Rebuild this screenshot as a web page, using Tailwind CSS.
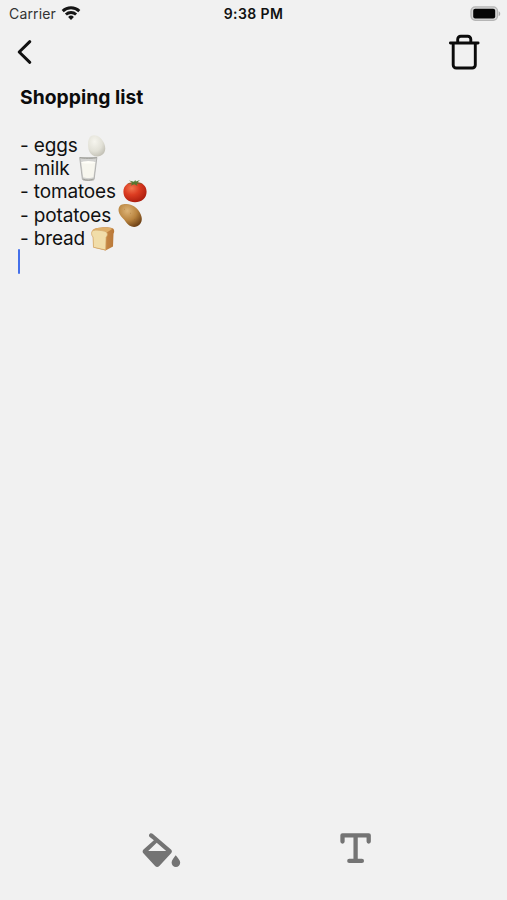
<!DOCTYPE html>
<html lang="en">
<head>
<meta charset="utf-8">
<title>Shopping list</title>
<script src="https://cdn.jsdelivr.net/npm/@tailwindcss/browser@4"></script>
</head>
<body class="bg-[#f1f1f1]">
<div class="w-[507px] h-[900px] flex flex-col bg-[#f1f1f1] font-['Inter','Liberation_Sans',sans-serif] text-[#111] overflow-hidden">
  <header class="h-[27px] grid grid-cols-3 items-center shrink-0">
    <div class="flex items-center pl-[9px] gap-[5px]">
      <span class="text-[14px] leading-[27px] text-[#333] tracking-[0.15px]">Carrier</span>
      <svg class="w-[20px] h-[15px]" viewBox="0 0 20 15" fill="none" stroke="#151515" stroke-width="2.9"><path d="M1.7 5.1a12 12 0 0 1 16.600 0M4.900 8.500a7.500 7.500 0 0 1 10.200 0"/><path d="M7.100 11a4.200 4.200 0 0 1 5.800 0L10 14z" fill="#151515" stroke="none"/></svg>
    </div>
    <span class="text-center text-[14px] font-semibold leading-[27px] tracking-[0.4px]">9:38 PM</span>
    <div class="flex justify-end pr-[6px]">
      <svg class="w-[31px] h-[16px]" viewBox="0 0 31 16"><rect x="1" y=".9" width="26.500" height="13.400" rx="4.200" fill="#d6d6d6" stroke="#b5b5b5" stroke-width="1.300"/><rect x="3.200" y="2.800" width="22" height="9.600" rx="2" fill="#050505"/><path d="M28.700 5.300c2 .8 2 4.100 0 4.900z" fill="#aaa"/></svg>
    </div>
  </header>
  <nav class="h-[51px] flex justify-between items-center pl-[16px] pr-[27px] shrink-0">
    <svg class="w-[18px] h-[26px] mb-[2px]" viewBox="0 0 18 26" fill="none" stroke="#111" stroke-width="3" stroke-linecap="round" stroke-linejoin="round"><path d="M13.800 2.700 3.200 13l10.600 10.300"/></svg>
    <svg class="w-[32px] h-[36px] mb-[1px]" viewBox="0 0 32 36" fill="none" stroke="#0b0b0b" stroke-width="2.900" stroke-linecap="round" stroke-linejoin="round"><path d="M2.400 9h27.700M5.200 9v22a3 3 0 0 0 3 3h16.100a3 3 0 0 0 3-3V9M9.700 9V5.200a3 3 0 0 1 3-3h7.100a3 3 0 0 1 3 3V9"/></svg>
  </nav>
  <main class="flex-1 pl-[20px] pt-[7px]">
    <h1 class="text-[19.300px] leading-[24px] h-[48.500px] font-bold tracking-[0.030px] text-[#0c0c0c]">Shopping list</h1>
    <div class="text-[19px] leading-[24px] tracking-[-0.150px]">
      <div class="flex h-[23.300px]"><span class="w-[64px] shrink-0">- eggs</span><svg class="w-[24px] h-[24px]" viewBox="0 0 24 24"><defs><radialGradient id="egg" cx=".38" cy=".3" r=".75"><stop stop-color="#f6f5ee"/><stop offset=".6" stop-color="#e2e1d7"/><stop offset="1" stop-color="#c2c0b5"/></radialGradient></defs><path d="M7.500 1.800C12-.3 17.800 3.600 20.200 9.500c2.300 5.500.8 10.300-3.600 12.200-4.600 1.900-9.700 0-11.500-4.800C3.400 12.300 3.300 4 7.500 1.800z" fill="url(#egg)"/></svg></div>
      <div class="flex h-[23.700px]"><span class="w-[56px] shrink-0">- milk</span><svg class="w-[24px] h-[24px]" viewBox="0 0 24 24"><path d="M3.700 .4h17.200l-2.800 22c-.2 1.500-11.500 1.500-11.700 0z" fill="#d3d3d1" stroke="#a6a6a3" stroke-width=".8"/><path d="M5.300 5h14l-1.900 15.200c-2 1-8.200 1-10.200 0z" fill="#f7f6ee"/><ellipse cx="12.300" cy="5.300" rx="7" ry="1.200" fill="#fffef8"/><path d="M4 .6c2 1.100 14.500 1.100 16.700 0M7 22c3 1.300 7.500 1.300 10.500 0" fill="none" stroke="#94948e" stroke-width=".8"/></svg></div>
      <div class="flex h-[23.200px]"><span class="w-[103px] shrink-0">- tomatoes</span><svg class="w-[24px] h-[24px]" viewBox="0 0 24 24"><defs><radialGradient id="tom" cx=".36" cy=".3" r=".75"><stop stop-color="#f17650"/><stop offset=".45" stop-color="#dc3c21"/><stop offset="1" stop-color="#a91c0d"/></radialGradient></defs><path d="M12 2.500c5-1.200 11.600 2 11.600 9.200 0 6.600-5.300 10.500-11.600 10.500S.4 18.300.4 11.700C.4 4.500 7 1.300 12 2.500z" fill="url(#tom)"/><path d="M4 4 9 2.600 6 .4l5 1.300L12.300 0l.6 1.500 4-1.400-2.500 2.300 5.200 1.200-5.900.2.800 2.300-3.200-1.900-3.700 1.500 1.500-2.300z" fill="#557832"/></svg></div>
      <div class="flex h-[23.000px]"><span class="w-[98px] shrink-0">- potatoes</span><svg class="w-[24px] h-[24px]" viewBox="0 0 24 24"><defs><radialGradient id="pot" cx=".38" cy=".3" r=".75"><stop stop-color="#ddb477"/><stop offset=".55" stop-color="#b9843f"/><stop offset="1" stop-color="#704317"/></radialGradient></defs><path d="M2 1.800C5.300-1.200 12-.2 16 2.300c3.300 2.300 5.500 5.200 6.900 8.400 2 4.800.7 9.700-3.700 11.600-4.600 1.800-9-.6-11.500-4.600-1.600-2.500-4.800-4.500-6.300-7.900C.1 7 .2 4.100 2 1.800z" fill="url(#pot)"/><path d="M6 5l.6.400M12 9l.6.400M16 15l.6.600" stroke="#a06c32" stroke-width=".7"/></svg></div>
      <div class="flex h-[23.300px]"><span class="w-[71px] shrink-0">- bread</span><svg class="w-[24px] h-[24px]" viewBox="0 0 24 24"><defs><linearGradient id="side"><stop stop-color="#d79c55"/><stop offset="1" stop-color="#b97838"/></linearGradient></defs><path d="M1.500 3C4.500-.1 17-.6 21.500 1.200c2.300 1.300 1.900 4 1 5.500L22 19.500l-7.500 4L2.500 20.600z" fill="url(#side)"/><path d="M2 3C5.500 0 17.500-.1 21.500 1.700L15 6z" fill="#dfae68"/><path d="M1.500 3.800c2.300-1.500 10.900-.3 13.500 1 2 1.300 1.600 4 .1 5.500L14.700 23 2.500 20.300 2 10C.3 8.400 0 5.200 1.500 3.800z" fill="#f1dda9" stroke="#d2a566" stroke-width=".7"/></svg></div>
    </div>
    <div class="w-[2.400px] h-[25px] -ml-[2px] -mt-[1px] bg-[#4470ea] rounded-full"></div>
  </main>
  <footer class="h-[101px] shrink-0 flex pt-[33px]">
    <div class="pl-[141px] w-[338px]"><svg class="w-[42px] h-[38px]" viewBox="0 0 42 38"><path fill="#747474" fill-rule="evenodd" d="M8.200 2.500c.8-1.500 2.300-1.800 3.400-.7L30 17.500c1.200 1.100 1.200 2.600.1 3.700L18.300 34c-1.200 1.200-3 1.200-4.200 0L2.600 21.500c-1.300-1.300-1.300-2.800-.1-4L12.900 8.200 8.700 4.900c-.7-.6-.9-1.500-.5-2.400zM15.700 10.700 7.200 19h18z"/><path fill="#747474" d="M34.700 23.200c1.800 2.400 4.500 5.100 4.500 7.400a4.300 4.300 0 0 1-8.600 0c0-2.300 2.400-5 4.100-7.400z"/></svg></div>
    <svg class="w-[36px] h-[34px]" viewBox="0 0 36 34" fill="none" stroke="#747474" stroke-width="4.300" stroke-linecap="round" stroke-linejoin="round"><path d="M4.500 9.500V3.300h26.200v6.200M17.600 3.300v25.400M11.300 28.900h12.600"/></svg>
  </footer>
</div>
</body>
</html>
